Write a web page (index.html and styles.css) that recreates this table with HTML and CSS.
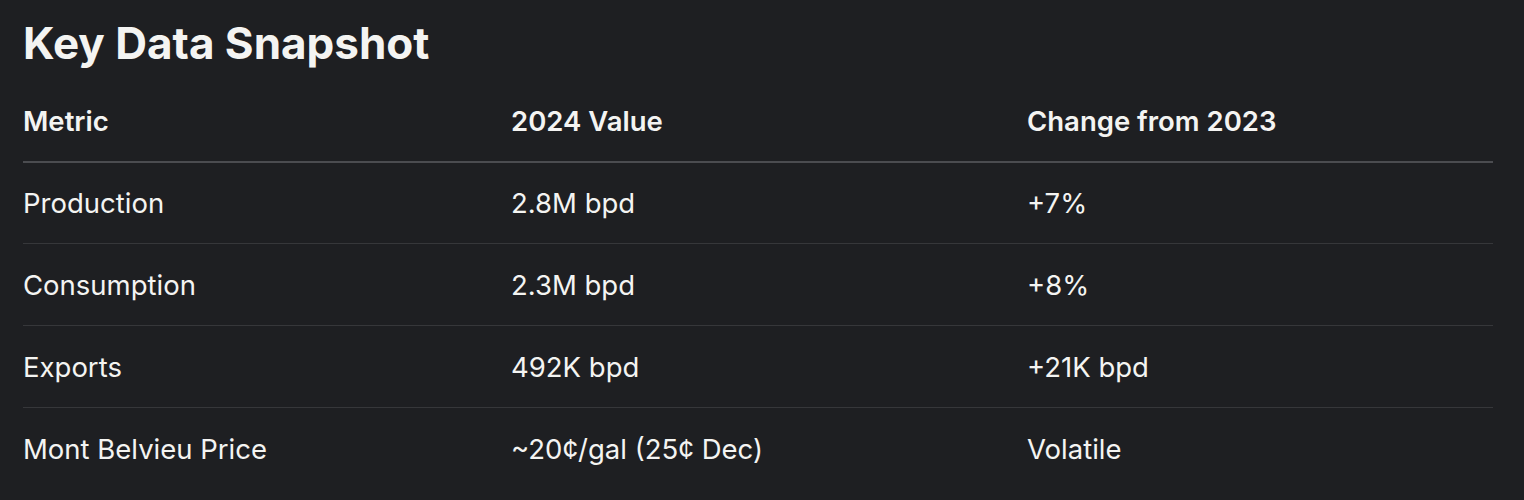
FILE: index.html
```html
<!DOCTYPE html>
<html lang="en">
<head>
<meta charset="utf-8">
<title>Key Data Snapshot</title>
<link rel="stylesheet" href="styles.css">
</head>
<body>
<main class="page">
  <h2 class="title">Key Data Snapshot</h2>
  <table class="data">
    <colgroup>
      <col class="c1"><col class="c2"><col class="c3">
    </colgroup>
    <thead>
      <tr><th>Metric</th><th>2024 Value</th><th>Change from 2023</th></tr>
    </thead>
    <tbody>
      <tr><td>Production</td><td>2.8M bpd</td><td>+7%</td></tr>
      <tr><td>Consumption</td><td>2.3M bpd</td><td>+8%</td></tr>
      <tr><td>Exports</td><td>492K bpd</td><td>+21K bpd</td></tr>
      <tr><td>Mont Belvieu Price</td><td>~20¢/gal (25¢ Dec)</td><td>Volatile</td></tr>
    </tbody>
  </table>
</main>
</body>
</html>
```
FILE: styles.css
```css
html, body {
  margin: 0;
  padding: 0;
  background: #1e1f22;
}
body {
  font-family: Inter, "Noto Sans", sans-serif;
  color: #f4f4f2;
}
.page {
  padding: 0 31px 0 23px;
}
.title {
  margin: 0;
  padding-top: 18px;
  font-size: 44px;
  font-weight: 700;
  line-height: 50px;
  height: 62px;
}
.data {
  width: 1470px;
  border-collapse: collapse;
  table-layout: fixed;
}
.c1 { width: 488px; }
.c2 { width: 516px; }
.c3 { width: 466px; }
.data th {
  text-align: left;
  font-weight: 600;
  font-size: 27.5px;
  line-height: 34px;
  height: 81px;
  padding: 0;
  border-bottom: 2px solid #4b4c50;
}
.data td {
  font-size: 27.5px;
  line-height: 34px;
  font-weight: 400;
  height: 81px;
  padding: 0;
  border-bottom: 1px solid #36373a;
}
.data tbody tr:first-child td {
  height: 80px;
}
.data tbody tr:last-child td {
  border-bottom: none;
}
```
